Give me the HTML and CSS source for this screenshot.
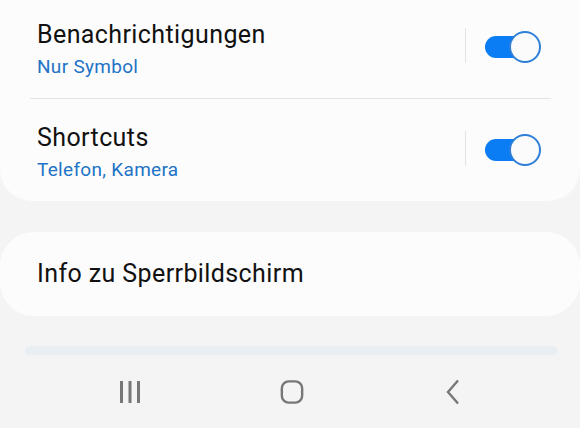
FILE: index.html
```html
<!DOCTYPE html>
<html>

<head lang="de">
    <meta charset="UTF-8">
    <title>Sperrbildschirm</title>
    <link rel="stylesheet" href="styles.css">
</head>

<body>
    <div class="card card-list">
        <div class="row">
            <div class="texts">
                <p class="title">Benachrichtigungen</p>
                <p class="sub">Nur Symbol</p>
            </div>
            <span class="sep"></span>
            <span class="switch on"><span class="knob"></span></span>
        </div>
        <hr class="divider">
        <div class="row">
            <div class="texts">
                <p class="title">Shortcuts</p>
                <p class="sub">Telefon, Kamera</p>
            </div>
            <span class="sep"></span>
            <span class="switch on"><span class="knob"></span></span>
        </div>
    </div>

    <div class="card card-single">
        <p class="title">Info zu Sperrbildschirm</p>
    </div>

    <div class="peek"></div>

    <nav class="navbar">
        <span class="nav-btn">
            <svg width="24" height="24" viewBox="0 0 24 24">
                <rect x="2" y="1" width="3" height="22" fill="#777"/>
                <rect x="10.5" y="1" width="3" height="22" fill="#777"/>
                <rect x="19" y="1" width="3" height="22" fill="#777"/>
            </svg>
        </span>
        <span class="nav-btn">
            <svg width="26" height="26" viewBox="0 0 26 26">
                <rect x="2" y="1.5" width="22" height="23" rx="7.5" fill="none" stroke="#777" stroke-width="2.6"/>
            </svg>
        </span>
        <span class="nav-btn">
            <svg width="24" height="26" viewBox="0 0 24 26">
                <polyline points="16,1.5 6,13 16,24.5" fill="none" stroke="#777" stroke-width="2.4"/>
            </svg>
        </span>
    </nav>
</body>

</html>
```

FILE: styles.css
```css
body {
    margin: 0;
    background-color: #f4f4f4;
    font-family: Roboto, "Noto Sans", sans-serif;
    overflow: hidden;
}

p {
    margin: 0;
}

.card {
    background-color: #fcfcfc;
}

.card-list {
    margin-top: -4px;
    padding: 0 29px;
    border-radius: 0 0 32px 32px;
}

.row {
    display: flex;
    align-items: center;
    padding: 24px 10px 19px 8px;
}

.texts {
    flex: 1;
}

.title {
    font-size: 25px;
    line-height: 30px;
    letter-spacing: 0.4px;
    color: #111111;
}

.sub {
    margin-top: 5px;
    font-size: 19px;
    line-height: 24px;
    letter-spacing: 0.3px;
    color: #2273c6;
}

.sep {
    width: 1px;
    height: 35px;
    margin: 0 19px 8px 0;
    background-color: #e4e4e4;
}

.switch {
    position: relative;
    width: 56px;
    height: 32px;
    margin-bottom: 6px;
}

.switch.on::before {
    content: "";
    position: absolute;
    left: 0;
    top: 5px;
    width: 46px;
    height: 22px;
    border-radius: 11px;
    background-color: #0a7cf4;
}

.switch .knob {
    position: absolute;
    right: 0;
    top: 0;
    width: 28px;
    height: 28px;
    border-radius: 50%;
    background-color: #fbfbfb;
    border: 2px solid #2e7fd8;
}

.divider {
    margin: 0 0 0 1px;
    height: 1px;
    border: none;
    background-color: #e4e4e4;
}

.card-single {
    margin-top: 31px;
    height: 84px;
    border-radius: 34px;
    padding-left: 37px;
    display: flex;
    align-items: center;
}

.peek {
    margin: 30px 22px 0 25px;
    height: 9px;
    border-radius: 5px;
    background-color: #e9eef3;
}

.navbar {
    display: flex;
    justify-content: center;
    align-items: center;
    gap: 138px;
    padding-left: 4px;
    height: 74px;
}

.nav-btn {
    width: 24px;
    display: flex;
    justify-content: center;
}
```
